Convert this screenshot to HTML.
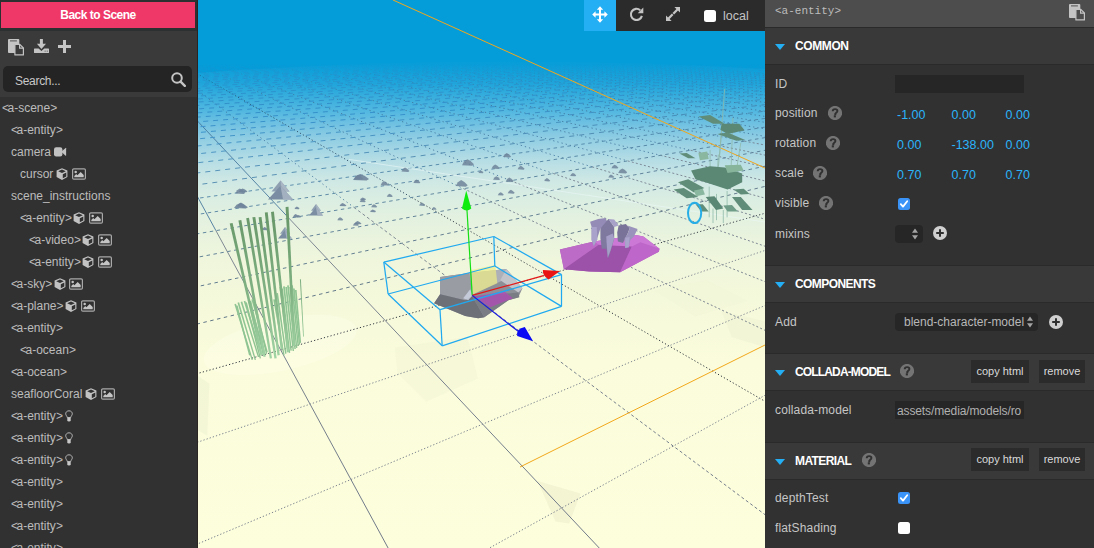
<!DOCTYPE html>
<html lang="en">
<head>
<meta charset="utf-8">
<title>A-Frame Inspector</title>
<style>
*{box-sizing:border-box;margin:0;padding:0}
html,body{width:1094px;height:548px;overflow:hidden;background:#2b2b2b}
body{font-family:"Liberation Sans",sans-serif;font-size:12px;color:#bcbcbc;position:relative}
#left{position:absolute;left:0;top:0;width:198px;height:548px;background:#3a3a3a;overflow:hidden}
#left .topframe{position:absolute;left:0;top:0;width:198px;height:31px;background:#2d3030}
#back{position:absolute;left:1px;top:2px;width:194px;height:26px;background:#ef3868;color:#fff;font-weight:bold;font-size:12px;line-height:26px;text-align:center;letter-spacing:-.5px}
#left .edge{position:absolute;left:197px;top:0;width:1px;height:548px;background:#2a2423}
#tree{position:absolute;left:0;top:97px;width:198px;height:451px;background:#313131}
#tree .row{margin-top:-97px}
#search{position:absolute;left:3px;top:66px;width:189px;height:26px;background:#242424;border-radius:5px}
#search span{position:absolute;left:12px;top:1px;line-height:28px;font-size:12px;color:#c8c8c8;letter-spacing:-.3px}
.row{position:absolute;left:0;height:22px;line-height:22px;font-size:12px;color:#bcbcbc;white-space:nowrap}
.row u{text-decoration:none;letter-spacing:-1.5px}
.row svg{vertical-align:-2px;margin-left:3px}
.row svg+svg{margin-left:3.6px}
#view{position:absolute;left:0;top:0;width:1094px;height:548px;overflow:hidden}
#scene{position:absolute;left:0;top:0;display:block}
#toolbar{position:absolute;left:584px;top:0;width:181px;height:31px;background:#2b2b2b}
#toolbar .act{position:absolute;left:0;top:0;width:32px;height:31px;background:#24aff4}
#right{position:absolute;left:765px;top:0;width:329px;height:548px;background:#313131;overflow:hidden}
#right .hdr{position:absolute;left:0;top:0;width:329px;height:27px;background:#4d4d4d;font-family:"Liberation Mono",monospace;font-size:11px;color:#bcbcbc;line-height:23px;padding-left:10px}
.sec{position:absolute;left:0;width:329px;height:38px;background:#393939;border-top:1px solid #2a2a2a;border-bottom:1px solid #2a2a2a}
.sec b{position:absolute;left:30px;top:0;line-height:37px;font-size:12px;color:#fff;letter-spacing:-.45px;white-space:nowrap}
.sec i{position:absolute;left:10px;top:16px;width:0;height:0;border-left:5px solid transparent;border-right:5px solid transparent;border-top:6px solid #24aff4}
.lab{position:absolute;left:10px;font-size:12px;color:#c6c6c6;letter-spacing:.15px;line-height:16px}
.num{position:absolute;font-size:12.5px;color:#2bb4fa;line-height:16px}
.inp{position:absolute;background:#262626;overflow:hidden;white-space:nowrap}
.inp span{position:absolute;left:2px;top:1px;line-height:18px;font-size:12px;color:#b0b0b0;letter-spacing:-.12px}
.sel{position:absolute;background:#262626;border-radius:4px;white-space:nowrap}
.sel span{position:absolute;left:9px;top:0;line-height:18px;font-size:12px;color:#b8b8b8}
.sel .ud{position:absolute;right:5px;top:3px}
.cb{position:absolute;width:12px;height:12px;border-radius:2.5px;background:#fff}
.cb.on{background:#3a93f7}
.cb svg{display:block}
.btn{position:absolute;height:23px;background:#2b2b2b;color:#dadada;font-size:11px;line-height:22px;text-align:center}
</style>
</head>
<body>
<svg width="0" height="0" style="position:absolute"><defs>
<symbol id="i-cube" viewBox="0 0 12 12"><path d="M6 0.2 L11.4 2.6 V9 L6 11.9 L0.6 9 V2.6 Z" fill="#c2c2c2"/><path d="M6 1.5 L9.8 3.2 L6 4.9 L2.2 3.2 Z M6.8 6.2 L10.3 4.5 V8.4 L6.8 10.3 Z" fill="#313131"/></symbol>
<symbol id="i-image" viewBox="0 0 14 12"><rect x="0.6" y="0.9" width="12.8" height="10.2" rx="1.2" fill="none" stroke="#a8a8a8" stroke-width="1.2"/><circle cx="3.7" cy="3.9" r="1.25" fill="#c4c4c4"/><path d="M2.3 9.3 V7.9 L4.2 6 L5.4 7.2 L8.7 3.9 L11.7 6.9 V9.3 Z" fill="#c4c4c4"/></symbol>
<symbol id="i-video" viewBox="0 0 13 12"><rect x="0" y="1.2" width="8.4" height="9.2" rx="2.2" fill="#c2c2c2"/><path d="M7.2 5.8 L11.6 1.9 Q12.1 1.6 12.1 2.2 V9.4 Q12.1 10 11.6 9.7 Z" fill="#c2c2c2"/></symbol>
<symbol id="i-bulb" viewBox="0 0 8 12"><path d="M4 0.8 C1.9 0.8 0.7 2.3 0.7 3.8 C0.7 5.2 2 6 2.3 7.6 H5.7 C6 6 7.3 5.2 7.3 3.8 C7.3 2.3 6.1 0.8 4 0.8 Z" fill="none" stroke="#bdbdbd" stroke-width="0.95"/><path d="M2.3 7.6 H5.7 V10.3 Q5.7 11.6 4 11.6 Q2.3 11.6 2.3 10.3 Z" fill="#c8c8c8"/></symbol>
<symbol id="i-q" viewBox="0 0 14 14"><circle cx="7" cy="7" r="7.1" fill="#747474"/><path d="M4.7 5.3 C4.7 3.9 5.7 3.1 7.1 3.1 C8.5 3.1 9.4 3.9 9.4 5 C9.4 6.6 7.4 6.6 7.4 8.3 H6.3" fill="none" stroke="#303030" stroke-width="1.9"/><rect x="5.8" y="9.3" width="2.1" height="2.1" fill="#303030"/></symbol>
<symbol id="i-plusc" viewBox="0 0 14 14"><circle cx="7" cy="7" r="7" fill="#d0d0d0"/><path d="M7 3.2 V10.8 M3.2 7 H10.8" stroke="#303030" stroke-width="2" fill="none"/></symbol>
<symbol id="i-clip" viewBox="0 0 17 17"><rect x="0" y="0" width="11.3" height="14" rx="0.9" fill="#c4c4c4"/><rect x="2" y="1.1" width="6.9" height="1.5" fill="#787878"/><path d="M6.9 5.4 H11.8 L15.4 9 V15.9 H6.9 Z" fill="#3a3a3a" stroke="#c4c4c4" stroke-width="1.2" stroke-linejoin="round"/><path d="M11.6 5.6 V9.2 H15.2" fill="none" stroke="#c4c4c4" stroke-width="1.2"/></symbol>
<symbol id="i-clip2" viewBox="0 0 17 17"><rect x="0" y="0" width="11.3" height="14" rx="0.9" fill="#c4c4c4"/><rect x="2" y="1.1" width="6.9" height="1.5" fill="#787878"/><path d="M6.9 5.4 H11.8 L15.4 9 V15.9 H6.9 Z" fill="#4d4d4d" stroke="#c4c4c4" stroke-width="1.2" stroke-linejoin="round"/><path d="M11.6 5.6 V9.2 H15.2" fill="none" stroke="#c4c4c4" stroke-width="1.2"/></symbol>
<symbol id="i-dl" viewBox="0 0 15 14"><path d="M5.9 0 H8.9 V4.8 H12 L7.45 9.9 L2.9 4.8 H5.9 Z" fill="#c4c4c4"/><path d="M0.6 9.4 H4.6 L7.45 11.9 L10.3 9.4 H14.4 Q15 9.4 15 10 V13.4 Q15 14 14.4 14 H0.6 Q0 14 0 13.4 V10 Q0 9.4 0.6 9.4 Z" fill="#c4c4c4"/><rect x="10.6" y="11.6" width="1.1" height="1.1" fill="#6a6a6a"/><rect x="12.7" y="11.6" width="1.1" height="1.1" fill="#6a6a6a"/></symbol>
<symbol id="i-search" viewBox="0 0 15 15"><circle cx="6" cy="6" r="4.8" fill="none" stroke="#c4c4c4" stroke-width="2"/><path d="M9.6 9.6 L13.8 13.8" stroke="#c4c4c4" stroke-width="2.4" stroke-linecap="round"/></symbol>
</defs></svg>
<div id="view"><svg id="scene" width="1094" height="548" viewBox="0 0 1094 548">
<defs>
<linearGradient id="gnd" x1="0" y1="62" x2="0" y2="548" gradientUnits="userSpaceOnUse">
<stop offset="0.0000" stop-color="#069dd9"/>
<stop offset="0.0473" stop-color="#22a6db"/>
<stop offset="0.0988" stop-color="#50b7e0"/>
<stop offset="0.1296" stop-color="#72c2e2"/>
<stop offset="0.1564" stop-color="#8fcde3"/>
<stop offset="0.2016" stop-color="#b5dde5"/>
<stop offset="0.2449" stop-color="#cfe8e4"/>
<stop offset="0.2840" stop-color="#dbeee2"/>
<stop offset="0.3354" stop-color="#e6f2df"/>
<stop offset="0.4074" stop-color="#eff6dc"/>
<stop offset="0.4897" stop-color="#f5f9db"/>
<stop offset="0.6132" stop-color="#fafcdb"/>
<stop offset="1.0000" stop-color="#fdfedc"/>
</linearGradient>
<linearGradient id="fade" x1="0" y1="64" x2="0" y2="548" gradientUnits="userSpaceOnUse">
<stop offset="0" stop-color="#fff" stop-opacity="0"/>
<stop offset="0.025" stop-color="#fff" stop-opacity="0.45"/>
<stop offset="0.08" stop-color="#fff" stop-opacity="0.8"/>
<stop offset="0.3" stop-color="#fff" stop-opacity="0.85"/>
<stop offset="0.5" stop-color="#fff" stop-opacity="0.9"/>
<stop offset="1" stop-color="#fff" stop-opacity="1"/>
</linearGradient>
<mask id="fm" maskUnits="userSpaceOnUse" x="0" y="0" width="1094" height="548"><rect x="0" y="0" width="1094" height="548" fill="url(#fade)"/></mask>
<linearGradient id="weed" x1="0" y1="221" x2="0" y2="360" gradientUnits="userSpaceOnUse"><stop offset="0" stop-color="#6a9a6c"/><stop offset="0.5" stop-color="#7fb183"/><stop offset="1" stop-color="#a2d5a5"/></linearGradient>
</defs>
<rect x="198" y="0" width="567" height="548" fill="#059dd9"/>
<path d="M198 73 Q480 52 765 69 L765 548 L198 548 Z" fill="url(#gnd)"/>
<ellipse cx="280" cy="345" rx="78" ry="26" fill="#ffffee" opacity="0.35" transform="rotate(-12 280 345)"/>
<polygon points="537.5,481.1 580.5,493.5 569.1,523.6 555.6,521.5" fill="#ebebc9" opacity="0.5"/>
<polygon points="394.9,347.4 467.5,337.0 477.9,378.5 426.0,401.8 397.5,373.3" fill="#eef0d0" opacity="0.35"/>
<polygon points="198.0,375.9 209.4,383.7 207.3,435.5 198.0,430.3" fill="#ecefcf" opacity="0.45"/>
<polygon points="721.5,311.1 765.0,321.5 765.0,347.4 731.8,337.0" fill="#eef1d2" opacity="0.5"/>
<polygon points="654.1,290.4 705.9,280.0 747.4,300.7 695.5,316.3" fill="#f2f5d8" opacity="0.5"/>
<g mask="url(#fm)" fill="none" stroke-width="1">
<line x1="106.7" y1="29.4" x2="215.9" y2="230.6" stroke="#3f7199"/>
<line x1="215.9" y1="230.6" x2="2140.6" y2="3778.2" stroke="#6f7888"/>
<line x1="111.3" y1="29.4" x2="289.0" y2="218.3" stroke="#3f7199"/>
<line x1="289.0" y1="218.3" x2="1766.2" y2="1788.2" stroke="#6f7888"/>
<line x1="115.8" y1="29.4" x2="353.8" y2="207.3" stroke="#3f7199" stroke-dasharray="1.3 3"/>
<line x1="353.8" y1="207.3" x2="1651.3" y2="1177.1" stroke="#6f7888" stroke-dasharray="3 2.5"/>
<line x1="120.3" y1="29.3" x2="411.7" y2="197.5" stroke="#1f3a55" stroke-dasharray="1.2 2.2"/>
<line x1="411.7" y1="197.5" x2="1595.5" y2="880.4" stroke="#1f2530" stroke-dasharray="1.2 2.2"/>
<line x1="124.8" y1="29.3" x2="463.7" y2="188.7" stroke="#3f7199" stroke-dasharray="1.3 3"/>
<line x1="463.7" y1="188.7" x2="1562.5" y2="705.2" stroke="#6f7888" stroke-dasharray="2 2.2"/>
<line x1="129.2" y1="29.3" x2="510.7" y2="180.7" stroke="#3f7199" stroke-dasharray="1.3 3"/>
<line x1="510.7" y1="180.7" x2="1540.8" y2="589.5" stroke="#6f7888" stroke-dasharray="2 2.2"/>
<line x1="133.6" y1="29.3" x2="553.3" y2="173.5" stroke="#3f7199" stroke-dasharray="1.3 3"/>
<line x1="553.3" y1="173.5" x2="1525.3" y2="507.4" stroke="#6f7888" stroke-dasharray="2 2.2"/>
<line x1="138.0" y1="29.3" x2="592.2" y2="166.9" stroke="#3f7199" stroke-dasharray="1.3 3"/>
<line x1="592.2" y1="166.9" x2="1513.8" y2="446.1" stroke="#6f7888" stroke-dasharray="2 2.2"/>
<line x1="142.3" y1="29.3" x2="627.7" y2="160.9" stroke="#3f7199" stroke-dasharray="1.3 3"/>
<line x1="627.7" y1="160.9" x2="1504.9" y2="398.7" stroke="#6f7888" stroke-dasharray="2 2.2"/>
<line x1="146.6" y1="29.2" x2="660.4" y2="155.3" stroke="#3f7199" stroke-dasharray="1.3 3"/>
<line x1="660.4" y1="155.3" x2="1497.7" y2="360.8" stroke="#6f7888" stroke-dasharray="2 2.2"/>
<line x1="150.9" y1="29.2" x2="690.6" y2="150.2" stroke="#3f7199" stroke-dasharray="1.3 3"/>
<line x1="690.6" y1="150.2" x2="1491.9" y2="329.9" stroke="#6f7888" stroke-dasharray="2 2.2"/>
<line x1="155.2" y1="29.2" x2="718.5" y2="145.5" stroke="#3f7199" stroke-dasharray="1.3 3"/>
<line x1="718.5" y1="145.5" x2="1487.1" y2="304.1" stroke="#6f7888" stroke-dasharray="2 2.2"/>
<line x1="159.4" y1="29.2" x2="744.4" y2="141.1" stroke="#3f7199" stroke-dasharray="1.3 3"/>
<line x1="744.4" y1="141.1" x2="1483.0" y2="282.4" stroke="#6f7888" stroke-dasharray="2 2.2"/>
<line x1="163.6" y1="29.2" x2="768.4" y2="137.0" stroke="#3f7199" stroke-dasharray="1.3 3"/>
<line x1="768.4" y1="137.0" x2="1479.5" y2="263.8" stroke="#6f7888" stroke-dasharray="2 2.2"/>
<line x1="167.8" y1="29.2" x2="790.9" y2="133.2" stroke="#3f7199" stroke-dasharray="1.3 3"/>
<line x1="790.9" y1="133.2" x2="1476.5" y2="247.7" stroke="#6f7888" stroke-dasharray="2 2.2"/>
<line x1="172.0" y1="29.1" x2="811.9" y2="129.7" stroke="#3f7199" stroke-dasharray="1.3 3"/>
<line x1="811.9" y1="129.7" x2="1473.8" y2="233.7" stroke="#6f7888" stroke-dasharray="2 2.2"/>
<line x1="176.1" y1="29.1" x2="831.5" y2="126.3" stroke="#3f7199" stroke-dasharray="1.3 3"/>
<line x1="831.5" y1="126.3" x2="1471.5" y2="221.2" stroke="#6f7888" stroke-dasharray="2 2.2"/>
<line x1="180.2" y1="29.1" x2="850.0" y2="123.2" stroke="#3f7199" stroke-dasharray="1.3 3"/>
<line x1="850.0" y1="123.2" x2="1469.4" y2="210.2" stroke="#6f7888" stroke-dasharray="2 2.2"/>
<line x1="184.2" y1="29.1" x2="867.3" y2="120.3" stroke="#3f7199" stroke-dasharray="1.3 3"/>
<line x1="867.3" y1="120.3" x2="1467.6" y2="200.4" stroke="#6f7888" stroke-dasharray="2 2.2"/>
<line x1="188.3" y1="29.1" x2="883.7" y2="117.5" stroke="#3f7199" stroke-dasharray="1.3 3"/>
<line x1="883.7" y1="117.5" x2="1465.9" y2="191.5" stroke="#6f7888" stroke-dasharray="2 2.2"/>
<line x1="192.3" y1="29.1" x2="899.1" y2="114.9" stroke="#3f7199" stroke-dasharray="1.3 3"/>
<line x1="899.1" y1="114.9" x2="1464.4" y2="183.5" stroke="#6f7888" stroke-dasharray="2 2.2"/>
<line x1="196.3" y1="29.0" x2="913.7" y2="112.4" stroke="#3f7199" stroke-dasharray="1.3 3"/>
<line x1="913.7" y1="112.4" x2="1463.0" y2="176.2" stroke="#6f7888" stroke-dasharray="2 2.2"/>
<line x1="200.3" y1="29.0" x2="927.6" y2="110.1" stroke="#3f7199" stroke-dasharray="1.3 3"/>
<line x1="927.6" y1="110.1" x2="1461.8" y2="169.6" stroke="#6f7888" stroke-dasharray="2 2.2"/>
<line x1="204.2" y1="29.0" x2="940.7" y2="107.8" stroke="#3f7199" stroke-dasharray="1.3 3"/>
<line x1="940.7" y1="107.8" x2="1460.6" y2="163.5" stroke="#6f7888" stroke-dasharray="2 2.2"/>
<line x1="208.1" y1="29.0" x2="953.1" y2="105.7" stroke="#3f7199" stroke-dasharray="1.3 3"/>
<line x1="953.1" y1="105.7" x2="1459.6" y2="157.9" stroke="#6f7888" stroke-dasharray="2 2.2"/>
<line x1="212.0" y1="29.0" x2="964.9" y2="103.7" stroke="#3f7199" stroke-dasharray="1.3 3"/>
<line x1="964.9" y1="103.7" x2="1458.6" y2="152.7" stroke="#6f7888" stroke-dasharray="2 2.2"/>
<line x1="215.9" y1="29.0" x2="976.2" y2="101.8" stroke="#3f7199" stroke-dasharray="1.3 3"/>
<line x1="976.2" y1="101.8" x2="1457.7" y2="148.0" stroke="#6f7888" stroke-dasharray="2 2.2"/>
<line x1="219.7" y1="29.0" x2="986.9" y2="100.0" stroke="#3f7199" stroke-dasharray="1.3 3"/>
<line x1="986.9" y1="100.0" x2="1456.9" y2="143.5" stroke="#6f7888" stroke-dasharray="2 2.2"/>
<line x1="223.5" y1="28.9" x2="997.2" y2="98.3" stroke="#3f7199" stroke-dasharray="1.3 3"/>
<line x1="997.2" y1="98.3" x2="1456.1" y2="139.4" stroke="#6f7888" stroke-dasharray="2 2.2"/>
<line x1="227.3" y1="28.9" x2="1007.0" y2="96.6" stroke="#3f7199" stroke-dasharray="1.3 3"/>
<line x1="1007.0" y1="96.6" x2="1455.4" y2="135.5" stroke="#6f7888" stroke-dasharray="2 2.2"/>
<line x1="231.1" y1="28.9" x2="1016.3" y2="95.0" stroke="#3f7199" stroke-dasharray="1.3 3"/>
<line x1="1016.3" y1="95.0" x2="1454.7" y2="131.9" stroke="#6f7888" stroke-dasharray="2 2.2"/>
<line x1="-7906.5" y1="234.0" x2="1016.9" y2="33.6" stroke="#2586c8" stroke-dasharray="5 5"/>
<line x1="-8870.5" y1="260.0" x2="1021.3" y2="33.6" stroke="#2586c8" stroke-dasharray="5 5"/>
<line x1="-10098.3" y1="293.2" x2="1025.8" y2="33.7" stroke="#2586c8" stroke-dasharray="5 5"/>
<line x1="-11715.5" y1="336.8" x2="1030.3" y2="33.8" stroke="#2686c8" stroke-dasharray="5 5"/>
<line x1="-13942.3" y1="396.9" x2="1034.8" y2="33.9" stroke="#2686c8" stroke-dasharray="5 5"/>
<line x1="-17203.4" y1="484.9" x2="1039.4" y2="34.0" stroke="#2686c8" stroke-dasharray="5 5"/>
<line x1="-22437.0" y1="626.2" x2="1044.1" y2="34.0" stroke="#2686c8" stroke-dasharray="5 5"/>
<line x1="-32209.3" y1="889.9" x2="1048.8" y2="34.1" stroke="#2786c8" stroke-dasharray="5 5"/>
<line x1="-56943.7" y1="1557.5" x2="1053.5" y2="34.2" stroke="#2786c8" stroke-dasharray="5 5"/>
<line x1="-243200.7" y1="6584.6" x2="1058.3" y2="34.3" stroke="#2786c8" stroke-dasharray="5 5"/>
<line x1="-821195.4" y1="22554.7" x2="1063.1" y2="34.4" stroke="#2786c8" stroke-dasharray="5 5"/>
<line x1="-815934.9" y1="22894.8" x2="1068.0" y2="34.4" stroke="#2786c8" stroke-dasharray="5 5"/>
<line x1="-810547.1" y1="23243.2" x2="1072.9" y2="34.5" stroke="#2887c7" stroke-dasharray="5 5"/>
<line x1="-805027.5" y1="23600.1" x2="1077.9" y2="34.6" stroke="#2887c7" stroke-dasharray="5 5"/>
<line x1="-799371.0" y1="23965.9" x2="1082.9" y2="34.7" stroke="#2887c7" stroke-dasharray="5 5"/>
<line x1="-793572.5" y1="24340.9" x2="1088.0" y2="34.8" stroke="#2887c7" stroke-dasharray="5 5"/>
<line x1="-787626.7" y1="24725.3" x2="1093.2" y2="34.9" stroke="#2887c7" stroke-dasharray="5 5"/>
<line x1="-781527.8" y1="25119.7" x2="1098.4" y2="35.0" stroke="#2987c7" stroke-dasharray="5 5"/>
<line x1="-775269.9" y1="25524.4" x2="1103.6" y2="35.0" stroke="#2987c7" stroke-dasharray="5 5"/>
<line x1="-768846.6" y1="25939.7" x2="1108.9" y2="35.1" stroke="#2987c7" stroke-dasharray="5 5"/>
<line x1="-762251.4" y1="26366.2" x2="1114.3" y2="35.2" stroke="#2987c7" stroke-dasharray="5 5"/>
<line x1="-755477.1" y1="26804.2" x2="1119.7" y2="35.3" stroke="#2a87c7" stroke-dasharray="5 5"/>
<line x1="-748516.4" y1="27254.3" x2="1125.2" y2="35.4" stroke="#2a87c7" stroke-dasharray="5 5"/>
<line x1="-741361.6" y1="27717.0" x2="1130.7" y2="35.5" stroke="#2a87c7" stroke-dasharray="5 5"/>
<line x1="-734004.3" y1="28192.7" x2="1136.3" y2="35.6" stroke="#2a87c7" stroke-dasharray="5 5"/>
<line x1="-726435.9" y1="28682.1" x2="1141.9" y2="35.7" stroke="#2a87c7" stroke-dasharray="5 5"/>
<line x1="-718647.1" y1="29185.8" x2="1147.7" y2="35.8" stroke="#2b87c7" stroke-dasharray="5 5"/>
<line x1="-710628.2" y1="29704.3" x2="1153.4" y2="35.9" stroke="#2b87c7" stroke-dasharray="5 5"/>
<line x1="-702368.8" y1="30238.4" x2="1159.3" y2="36.0" stroke="#2b87c7" stroke-dasharray="5 5"/>
<line x1="-693858.0" y1="30788.7" x2="1165.2" y2="36.1" stroke="#2b87c7" stroke-dasharray="5 5"/>
<line x1="-685084.0" y1="31356.1" x2="1171.2" y2="36.2" stroke="#2c87c7" stroke-dasharray="5 5"/>
<line x1="-676034.6" y1="31941.3" x2="1177.2" y2="36.3" stroke="#2c87c7" stroke-dasharray="5 5"/>
<line x1="-666696.4" y1="32545.1" x2="1183.3" y2="36.4" stroke="#2c87c7" stroke-dasharray="5 5"/>
<line x1="-657055.5" y1="33168.5" x2="1189.5" y2="36.5" stroke="#2c87c7" stroke-dasharray="5 5"/>
<line x1="-647096.8" y1="33812.5" x2="1195.7" y2="36.6" stroke="#2c87c7" stroke-dasharray="5 5"/>
<line x1="-636804.5" y1="34478.0" x2="1202.1" y2="36.7" stroke="#2d88c6" stroke-dasharray="5 5"/>
<line x1="-626161.5" y1="35166.2" x2="1208.5" y2="36.8" stroke="#2d88c6" stroke-dasharray="5 5"/>
<line x1="-615149.5" y1="35878.3" x2="1214.9" y2="36.9" stroke="#2d88c6" stroke-dasharray="5 5"/>
<line x1="-603749.1" y1="36615.5" x2="1221.5" y2="37.1" stroke="#2d88c6" stroke-dasharray="5 5"/>
<line x1="-591939.2" y1="37379.1" x2="1228.1" y2="37.2" stroke="#2d88c6" stroke-dasharray="5 5"/>
<line x1="-579697.4" y1="38170.7" x2="1234.8" y2="37.3" stroke="#2e88c6" stroke-dasharray="5 5"/>
<line x1="-566999.6" y1="38991.8" x2="1241.6" y2="37.4" stroke="#2e88c6" stroke-dasharray="5 5"/>
<line x1="-553819.9" y1="39844.1" x2="1248.5" y2="37.5" stroke="#2e88c6" stroke-dasharray="5 5"/>
<line x1="-540130.2" y1="40729.3" x2="1255.4" y2="37.6" stroke="#2e88c6" stroke-dasharray="5 5"/>
<line x1="-525900.4" y1="41649.4" x2="1262.5" y2="37.8" stroke="#2f88c6" stroke-dasharray="5 5"/>
<line x1="-511097.8" y1="42606.6" x2="1269.6" y2="37.9" stroke="#2f88c6" stroke-dasharray="5 5"/>
<line x1="-495687.3" y1="43603.1" x2="1276.8" y2="38.0" stroke="#2f88c6" stroke-dasharray="5 5"/>
<line x1="-479630.5" y1="44641.4" x2="1284.1" y2="38.1" stroke="#3388c2" stroke-dasharray="5 5"/>
<line x1="-462885.8" y1="45724.2" x2="1291.5" y2="38.3" stroke="#3788bf" stroke-dasharray="5 5"/>
<line x1="-445408.3" y1="46854.3" x2="1299.0" y2="38.4" stroke="#3b88bc" stroke-dasharray="5 5"/>
<line x1="-427148.6" y1="48035.1" x2="1306.5" y2="38.5" stroke="#3f88b8" stroke-dasharray="5 5"/>
<line x1="-408053.0" y1="49269.8" x2="1314.2" y2="38.6" stroke="#4284b1" stroke-dasharray="5 5"/>
<line x1="-388062.9" y1="50562.5" x2="1322.0" y2="38.8" stroke="#4481aa" stroke-dasharray="5 5"/>
<line x1="-367113.7" y1="51917.1" x2="1329.8" y2="38.9" stroke="#477ea3" stroke-dasharray="3.5 3.5"/>
<line x1="-345134.9" y1="53338.3" x2="1337.8" y2="39.0" stroke="#4a7a9c" stroke-dasharray="3.5 3.5"/>
<line x1="-322048.7" y1="54831.2" x2="1345.9" y2="39.2" stroke="#4c7694" stroke-dasharray="3.5 3.5"/>
<line x1="-297769.0" y1="56401.2" x2="1354.1" y2="39.3" stroke="#4d718d" stroke-dasharray="3.5 3.5"/>
<line x1="-272201.1" y1="58054.5" x2="1362.4" y2="39.5" stroke="#4e6c86" stroke-dasharray="3.5 3.5"/>
<line x1="-245239.4" y1="59797.9" x2="1370.8" y2="39.6" stroke="#50687e" stroke-dasharray="3.5 3.5"/>
<line x1="-216766.9" y1="61639.0" x2="1379.3" y2="39.8" stroke="#1f2530" stroke-dasharray="1.2 2.2"/>
<line x1="-186652.9" y1="63586.3" x2="1387.9" y2="39.9" stroke="#787f8c" stroke-dasharray="1.3 2"/>
<line x1="-154751.2" y1="65649.2" x2="1396.7" y2="40.1" stroke="#787f8c" stroke-dasharray="1.3 2"/>
<line x1="-120897.9" y1="67838.2" x2="1405.5" y2="40.2" stroke="#787f8c" stroke-dasharray="1.3 2"/>
<line x1="-84908.1" y1="70165.5" x2="1414.5" y2="40.4" stroke="#787f8c" stroke-dasharray="1.3 2"/>
<line x1="-46573.0" y1="72644.3" x2="1423.6" y2="40.5" stroke="#787f8c" stroke-dasharray="1.3 2"/>
<line x1="-5655.7" y1="75290.2" x2="1432.9" y2="40.7" stroke="#787f8c" stroke-dasharray="1.3 2"/>
</g>
<line x1="349" y1="159.4" x2="765" y2="222" stroke="#eaf7f7" stroke-width="1" opacity="0.6"/>
<line x1="393" y1="0" x2="765" y2="168" stroke="#f2a71b" stroke-width="1"/>
<line x1="520" y1="467" x2="765" y2="345" stroke="#f2a71b" stroke-width="1"/>
<polygon points="280.5,180.5 271.5,191.5 289.5,191.5" fill="#8e9fb2"/>
<polygon points="280.5,180.5 281.8,191.5 289.5,191.5" fill="#a9b6c3"/>
<polygon points="280.5,185.8 268.0,199.5 293.0,199.5" fill="#7b8da2"/>
<polygon points="280.5,185.8 283.0,199.5 293.0,199.5" fill="#a3b0bf"/>
<polygon points="316.0,204.0 311.0,210.7 321.0,210.7" fill="#8e9fb2"/>
<polygon points="316.0,204.0 316.7,210.7 321.0,210.7" fill="#a9b6c3"/>
<polygon points="316.0,207.2 309.0,215.5 323.0,215.5" fill="#7b8da2"/>
<polygon points="316.0,207.2 317.4,215.5 323.0,215.5" fill="#a3b0bf"/>
<polygon points="285.0,227.0 280.0,233.7 290.0,233.7" fill="#8e9fb2"/>
<polygon points="285.0,227.0 285.7,233.7 290.0,233.7" fill="#a9b6c3"/>
<polygon points="285.0,230.2 278.0,238.5 292.0,238.5" fill="#7b8da2"/>
<polygon points="285.0,230.2 286.4,238.5 292.0,238.5" fill="#a3b0bf"/>
<polygon points="234.0,208.0 236.5,204.8 240.3,203.0 244.1,204.5 248.0,207.2 245.9,208.5" fill="#6f849a" opacity="0.9"/>
<polygon points="238.5,192.0 240.1,189.7 242.6,188.5 245.0,189.6 247.5,191.5 246.2,192.3" fill="#6f849a" opacity="0.9"/>
<polygon points="353.0,180.0 355.9,176.1 360.2,174.0 364.5,175.8 369.0,179.1 366.6,180.6" fill="#6f849a" opacity="0.9"/>
<polygon points="339.5,206.0 340.8,204.1 342.6,203.0 344.5,203.9 346.5,205.6 345.4,206.3" fill="#6f849a" opacity="0.9"/>
<polygon points="354.5,224.0 355.8,222.1 357.6,221.0 359.5,221.9 361.5,223.6 360.4,224.3" fill="#6f849a" opacity="0.9"/>
<polygon points="360.0,200.0 361.1,198.4 362.7,197.5 364.3,198.2 366.0,199.6 365.1,200.2" fill="#6f849a" opacity="0.9"/>
<polygon points="370.0,212.0 371.1,210.4 372.7,209.5 374.3,210.2 376.0,211.6 375.1,212.2" fill="#6f849a" opacity="0.9"/>
<polygon points="293.0,217.0 294.1,215.1 295.7,214.0 297.3,214.9 299.0,216.6 298.1,217.3" fill="#6f849a" opacity="0.9"/>
<polygon points="294.5,209.0 295.4,207.4 296.8,206.5 298.1,207.2 299.5,208.6 298.8,209.2" fill="#6f849a" opacity="0.9"/>
<polygon points="262.0,230.0 263.1,228.1 264.7,227.0 266.3,227.9 268.0,229.6 267.1,230.3" fill="#6f849a" opacity="0.9"/>
<polygon points="235.3,193.4 237.1,190.2 239.8,188.4 242.5,189.9 245.3,192.7 243.8,193.9" fill="#6f849a" opacity="0.85"/>
<polygon points="237.3,206.6 238.7,204.0 240.9,202.6 243.1,203.8 245.3,206.0 244.1,207.0" fill="#6f849a" opacity="0.85"/>
<polygon points="354.0,179.2 355.7,176.2 358.1,174.7 360.5,176.0 363.0,178.5 361.7,179.6" fill="#6f849a" opacity="0.85"/>
<polygon points="380.6,185.2 382.0,182.6 384.2,181.2 386.4,182.4 388.6,184.6 387.4,185.6" fill="#6f849a" opacity="0.85"/>
<polygon points="401.4,171.6 402.9,169.0 405.0,167.6 407.2,168.8 409.4,171.0 408.2,172.0" fill="#6f849a" opacity="0.85"/>
<polygon points="413.4,182.9 414.7,180.6 416.6,179.4 418.4,180.4 420.4,182.4 419.4,183.2" fill="#6f849a" opacity="0.85"/>
<polygon points="359.7,201.9 360.8,200.0 362.4,198.9 364.0,199.8 365.7,201.5 364.8,202.2" fill="#6f849a" opacity="0.85"/>
<polygon points="371.2,207.2 372.3,205.2 373.9,204.2 375.5,205.1 377.2,206.7 376.3,207.5" fill="#6f849a" opacity="0.85"/>
<polygon points="386.8,196.7 387.9,194.8 389.5,193.7 391.1,194.6 392.8,196.3 391.9,197.0" fill="#6f849a" opacity="0.85"/>
<polygon points="419.1,205.6 420.2,203.6 421.8,202.6 423.4,203.5 425.1,205.1 424.2,205.9" fill="#6f849a" opacity="0.85"/>
<polygon points="337.3,220.2 338.4,218.2 340.0,217.2 341.6,218.1 343.3,219.7 342.4,220.5" fill="#6f849a" opacity="0.85"/>
<polygon points="352.9,225.4 354.0,223.4 355.6,222.4 357.3,223.3 358.9,224.9 358.0,225.7" fill="#6f849a" opacity="0.85"/>
<polygon points="296.1,217.4 297.0,215.7 298.4,214.9 299.7,215.6 301.1,217.0 300.4,217.6" fill="#6f849a" opacity="0.85"/>
<polygon points="462.0,165.2 464.1,161.3 467.4,159.2 470.6,161.0 474.0,164.3 472.2,165.8" fill="#6f849a" opacity="0.85"/>
<polygon points="455.7,186.1 457.9,182.2 461.1,180.1 464.4,181.9 467.7,185.2 465.9,186.7" fill="#6f849a" opacity="0.85"/>
<polygon points="491.6,168.5 493.0,165.9 495.2,164.5 497.4,165.7 499.6,167.9 498.4,168.9" fill="#6f849a" opacity="0.85"/>
<polygon points="503.1,157.0 504.5,154.4 506.7,153.0 508.8,154.2 511.1,156.4 509.9,157.4" fill="#6f849a" opacity="0.85"/>
<polygon points="517.6,169.3 518.9,167.1 520.8,165.8 522.7,166.9 524.6,168.8 523.6,169.7" fill="#6f849a" opacity="0.85"/>
<polygon points="505.7,181.5 507.1,178.9 509.3,177.5 511.4,178.7 513.7,180.9 512.5,181.9" fill="#6f849a" opacity="0.85"/>
<polygon points="493.1,179.8 494.4,177.5 496.3,176.3 498.2,177.3 500.1,179.2 499.1,180.1" fill="#6f849a" opacity="0.85"/>
<polygon points="507.7,193.3 509.0,191.0 510.9,189.8 512.8,190.9 514.7,192.8 513.7,193.7" fill="#6f849a" opacity="0.85"/>
<polygon points="497.8,195.2 498.9,193.2 500.5,192.2 502.1,193.1 503.8,194.7 502.9,195.5" fill="#6f849a" opacity="0.85"/>
<polygon points="544.2,181.1 545.3,179.2 546.9,178.1 548.5,179.0 550.2,180.7 549.3,181.4" fill="#6f849a" opacity="0.85"/>
<polygon points="570.2,175.9 571.3,173.9 572.9,172.9 574.6,173.8 576.2,175.4 575.3,176.2" fill="#6f849a" opacity="0.85"/>
<polygon points="611.4,168.3 612.7,166.0 614.6,164.8 616.5,165.8 618.4,167.8 617.4,168.6" fill="#6f849a" opacity="0.85"/>
<polygon points="618.2,172.9 619.9,170.0 622.3,168.4 624.7,169.8 627.2,172.2 625.9,173.4" fill="#6f849a" opacity="0.85"/>
<polygon points="608.3,177.5 609.4,175.5 611.0,174.5 612.6,175.4 614.3,177.0 613.4,177.8" fill="#6f849a" opacity="0.85"/>
<polygon points="431.6,209.5 432.5,207.9 433.9,207.0 435.2,207.8 436.6,209.2 435.9,209.8" fill="#6f849a" opacity="0.85"/>
<polygon points="478.5,173.1 479.4,171.4 480.8,170.6 482.1,171.3 483.5,172.7 482.8,173.3" fill="#6f849a" opacity="0.85"/>
<g>
<polygon points="236.0,303.8 234.4,304.3 251.6,360.1 252.9,359.7" fill="#8fc493"/>
<polygon points="239.1,302.2 237.5,302.7 254.7,360.1 256.0,359.7" fill="#8fc493"/>
<polygon points="242.2,301.6 240.6,302.1 257.8,357.0 259.1,356.6" fill="#8fc493"/>
<polygon points="245.3,300.7 243.7,301.2 260.9,355.5 262.3,355.1" fill="#8fc493"/>
<polygon points="249.4,299.8 247.7,300.2 264.0,353.9 265.4,353.5" fill="#8fc493"/>
<polygon points="253.1,299.1 251.4,299.6 266.5,352.4 267.8,352.0" fill="#8fc493"/>
<polygon points="281.1,286.9 279.4,287.1 287.3,352.3 288.7,352.1" fill="#8fc493"/>
<polygon points="284.8,286.2 283.1,286.4 290.4,350.7 291.8,350.5" fill="#8fc493"/>
<polygon points="288.8,285.3 287.1,285.5 294.4,349.1 295.8,349.0" fill="#8fc493"/>
<polygon points="292.9,285.3 291.2,285.5 297.5,346.0 298.9,345.9" fill="#8fc493"/>
<polygon points="296.6,290.0 294.9,290.1 299.7,342.9 301.1,342.8" fill="#8fc493"/>
<polygon points="237.6,305.4 235.9,305.8 249.1,355.5 250.5,355.1" fill="#8fc493"/>
<polygon points="246.9,302.3 245.2,302.7 259.7,358.6 261.0,358.2" fill="#8fc493"/>
<polygon points="251.2,300.7 249.6,301.1 262.8,355.4 264.1,355.1" fill="#8fc493"/>
<polygon points="255.6,302.3 253.9,302.7 265.9,353.9 267.2,353.6" fill="#8fc493"/>
<polygon points="282.9,288.4 281.2,288.6 288.8,352.9 290.2,352.7" fill="#8fc493"/>
<polygon points="287.0,286.9 285.3,287.1 292.6,351.0 294.0,350.9" fill="#8fc493"/>
<polygon points="291.0,286.9 289.3,287.0 296.0,347.9 297.4,347.8" fill="#8fc493"/>
<polygon points="294.7,288.4 293.0,288.6 298.8,344.8 300.2,344.7" fill="#8fc493"/>
<polygon points="278.0,293.0 276.3,293.3 285.1,353.8 286.5,353.6" fill="#8fc493"/>
<polygon points="274.8,299.2 273.2,299.5 283.3,355.4 284.6,355.2" fill="#8fc493"/>
<polygon points="232.6,223.0 229.7,223.6 260.5,355.5 262.7,355.0" fill="url(#weed)"/>
<polygon points="241.3,219.9 238.4,220.4 263.5,357.0 265.8,356.6" fill="url(#weed)"/>
<polygon points="249.0,217.8 246.2,218.2 269.8,358.6 272.0,358.2" fill="url(#weed)"/>
<polygon points="255.3,216.9 252.4,217.3 274.4,358.6 276.7,358.2" fill="url(#weed)"/>
<polygon points="261.5,216.9 258.6,217.3 277.5,355.4 279.8,355.1" fill="url(#weed)"/>
<polygon points="267.7,212.3 264.8,212.6 280.6,349.2 282.9,348.9" fill="url(#weed)"/>
<polygon points="273.9,211.6 271.0,212.0 286.8,352.3 289.1,352.0" fill="url(#weed)"/>
<polygon points="288.5,206.8 285.6,206.9 293.0,346.0 295.4,345.9" fill="url(#weed)"/>
<polygon points="300.9,279.2 299.9,279.2 303.1,336.7 303.9,336.6" fill="url(#weed)"/>
</g>
<line x1="724.7" y1="88.8" x2="719.5" y2="156.0" stroke="#8db8a8" stroke-width="0.9" opacity="0.85"/>
<line x1="722.4" y1="123.8" x2="718.3" y2="167.6" stroke="#8db8a8" stroke-width="0.9" opacity="0.85"/>
<line x1="732.9" y1="118.0" x2="731.1" y2="167.6" stroke="#8db8a8" stroke-width="0.9" opacity="0.85"/>
<line x1="740.8" y1="142.8" x2="736.4" y2="170.6" stroke="#8db8a8" stroke-width="0.9" opacity="0.85"/>
<line x1="710.1" y1="150.1" x2="710.1" y2="167.6" stroke="#8db8a8" stroke-width="0.9" opacity="0.85"/>
<line x1="718.3" y1="154.5" x2="717.7" y2="167.6" stroke="#8db8a8" stroke-width="0.9" opacity="0.85"/>
<line x1="709.2" y1="186.6" x2="709.2" y2="217.3" stroke="#8db8a8" stroke-width="0.9" opacity="0.85"/>
<line x1="716.5" y1="193.9" x2="716.5" y2="220.2" stroke="#8db8a8" stroke-width="0.9" opacity="0.85"/>
<line x1="727.1" y1="191.0" x2="727.1" y2="217.3" stroke="#8db8a8" stroke-width="0.9" opacity="0.85"/>
<line x1="723.3" y1="210.0" x2="723.3" y2="223.1" stroke="#8db8a8" stroke-width="0.9" opacity="0.85"/>
<line x1="713.0" y1="208.5" x2="713.0" y2="223.1" stroke="#8db8a8" stroke-width="0.9" opacity="0.85"/>
<polygon points="698.4,116.5 710.1,115.1 724.7,123.8 713.0,123.8" fill="#5f8d79"/>
<polygon points="721.8,123.8 739.3,123.8 744.6,130.2 727.6,134.0 720.3,129.7" fill="#5b8875"/>
<polygon points="717.4,134.0 727.6,132.6 745.2,139.9 736.4,140.8" fill="#5f8d79"/>
<polygon points="679.4,153.6 686.7,153.0 695.5,158.3 688.2,158.3" fill="#5f8d79"/>
<polygon points="698.4,153.0 707.2,151.6 708.7,158.9 699.9,160.3" fill="#8ab79f"/>
<polygon points="691.1,170.6 710.1,166.2 724.7,167.6 742.2,173.5 742.2,182.2 727.6,189.6 710.1,183.7 695.5,179.3" fill="#5a8874"/>
<polygon points="724.7,165.3 740.8,164.7 743.7,170.6 727.6,172.9" fill="#86b59c"/>
<polygon points="678.0,182.2 688.2,179.3 704.3,188.1 694.0,192.5" fill="#5f8d79"/>
<polygon points="673.6,189.6 683.8,188.1 698.4,196.9 686.7,198.3" fill="#5f8d79"/>
<polygon points="694.0,190.4 702.8,188.7 704.9,194.5 696.1,196.3" fill="#8ab79f"/>
<polygon points="705.7,196.9 714.5,196.3 723.3,208.5 716.0,210.0" fill="#5a8874"/>
<polygon points="732.0,196.9 740.8,196.9 752.5,210.0 742.2,210.0" fill="#5f8d79"/>
<polygon points="723.3,205.6 732.0,205.0 737.9,211.5 727.6,211.5" fill="#6f9d88"/>
<polygon points="733.5,189.6 743.7,188.7 749.6,193.9 740.8,194.5" fill="#5f8d79"/>
<polygon points="695.5,204.2 702.8,204.2 708.7,211.5 701.3,211.5" fill="#5f8d79"/>
<ellipse cx="694.6" cy="212.9" rx="6.6" ry="10.2" fill="none" stroke="#27aee6" stroke-width="2"/>
<polygon points="559.9,249.5 593.8,241.5 636.1,234.9 643.4,236.4 659.5,248.8 658.8,251.7 620.1,272.2 589.4,271.4 563.9,269.2" fill="#b25cbc"/>
<polygon points="559.9,249.5 593.8,241.5 598.9,244.7 563.9,269.2" fill="#bc6cc6"/>
<polygon points="598.9,244.7 631.8,246.6 620.1,272.2 589.4,271.4 563.9,269.2" fill="#9c52a8"/>
<polygon points="631.8,246.6 637.6,236.4 659.5,248.8 658.8,251.7 620.1,272.2" fill="#be66ca"/>
<polygon points="593.8,241.5 636.1,234.9 643.4,236.4 659.5,248.8 640.5,242.2 631.8,246.6 598.9,244.7" fill="#cc78d6"/>
<polygon points="590.1,221.8 598.2,218.9 605.5,218.1 608.4,224.0 600.4,228.4 596.7,240.0 593.8,245.9 591.6,240.0 591.6,226.9" fill="#948cb6"/>
<polygon points="591.6,226.9 596.7,226.9 597.4,239.3 593.8,245.9 591.6,240.0" fill="#a9a2ca"/>
<polygon points="600.4,228.4 608.4,218.9 614.2,226.9 614.2,238.6 611.3,248.8 608.4,258.3 606.2,248.8 601.8,248.8 600.4,238.6" fill="#7f789f"/>
<polygon points="606.2,236.4 612.8,233.5 614.2,238.6 610.6,250.3 607.7,257.8" fill="#a59ec6"/>
<polygon points="608.4,218.9 614.2,219.6 618.6,225.4 614.2,226.9" fill="#a8a1c8"/>
<polygon points="618.6,225.4 625.9,224.0 629.6,228.4 627.4,234.2 623.0,243.0 617.9,241.5 617.2,232.7" fill="#7a7399"/>
<polygon points="627.4,225.4 637.6,229.1 633.9,236.4 630.3,240.0 628.8,247.3 625.2,248.1 624.5,238.6 627.4,234.2 629.6,228.4" fill="#9a93bb"/>
<polygon points="625.2,237.8 629.6,237.1 628.8,247.3 625.2,248.1" fill="#aaa3cb"/>
<polygon points="440.1,277.1 469.2,273.1 506.3,269.1 512.4,276.1 522.4,288.2 518.4,297.2 508.4,300.2 484.3,317.3 478.2,318.3 465.2,315.9 434.1,303.3 440.1,294.2" fill="#8e9098"/>
<polygon points="440.1,277.1 469.2,273.1 472.2,295.2 465.2,300.2 440.1,294.2" fill="#9a9ca4"/>
<polygon points="469.2,273.1 506.3,269.1 512.4,276.1 496.3,283.2 472.6,294.6" fill="#aeb0b8"/>
<polygon points="506.3,269.1 512.4,276.1 522.4,288.2 518.4,292.6 500.3,280.2" fill="#c2c4ca"/>
<polygon points="434.1,303.3 440.1,294.2 465.2,300.2 472.2,296.2 484.3,317.3 478.2,318.3 465.2,315.9" fill="#6e7078"/>
<polygon points="472.2,296.2 518.4,292.6 519.4,297.2 508.4,300.2 484.3,317.3" fill="#7b7d85"/>
<polygon points="463.2,298.2 470.2,289.2 472.6,295.2 468.2,300.2" fill="#cfd6e6" opacity="0.8"/>
<polygon points="471.2,270.1 495.3,265.1 497.3,283.2 472.6,294.6" fill="#ecec84" opacity="0.7"/>
<polygon points="474.2,296.8 504.3,291.2 512.8,298.2 490.3,307.3" fill="#b048b8" opacity="0.75"/>
<line x1="383.8" y1="262.1" x2="493.8" y2="236.5" stroke="#20a9f0" stroke-width="1.25"/>
<line x1="493.8" y1="236.5" x2="561.5" y2="274.6" stroke="#20a9f0" stroke-width="1.25"/>
<line x1="561.5" y1="274.6" x2="440.0" y2="309.7" stroke="#20a9f0" stroke-width="1.25"/>
<line x1="440.0" y1="309.7" x2="383.8" y2="262.1" stroke="#20a9f0" stroke-width="1.25"/>
<line x1="388.1" y1="294.0" x2="494.8" y2="266.0" stroke="#20a9f0" stroke-width="1.25"/>
<line x1="494.8" y1="266.0" x2="561.5" y2="306.4" stroke="#20a9f0" stroke-width="1.25"/>
<line x1="561.5" y1="306.4" x2="442.2" y2="345.8" stroke="#20a9f0" stroke-width="1.25"/>
<line x1="442.2" y1="345.8" x2="388.1" y2="294.0" stroke="#20a9f0" stroke-width="1.25"/>
<line x1="383.8" y1="262.1" x2="388.1" y2="294.0" stroke="#20a9f0" stroke-width="1.25"/>
<line x1="493.8" y1="236.5" x2="494.8" y2="266.0" stroke="#20a9f0" stroke-width="1.25"/>
<line x1="561.5" y1="274.6" x2="561.5" y2="306.4" stroke="#20a9f0" stroke-width="1.25"/>
<line x1="440.0" y1="309.7" x2="442.2" y2="345.8" stroke="#20a9f0" stroke-width="1.25"/>
<line x1="472.2" y1="295.4" x2="466.9" y2="209" stroke="#14e014" stroke-width="1.2"/>
<path d="M466.2 190.5 L462 208.5 Q466.6 212.5 471.3 208.5 Z" fill="#10ec10"/>
<line x1="472.2" y1="295.4" x2="543.5" y2="275.7" stroke="#e41818" stroke-width="1.2"/>
<path d="M560.0 270.9 L542.9 270.1 Q542.5 276.1 548.5 279.4 Z" fill="#ea1414"/>
<line x1="472.2" y1="295.4" x2="518.8" y2="331.8" stroke="#1414e4" stroke-width="1.2"/>
<path d="M533.1 341.2 L517.2 336.0 Q516.0 328.4 524.8 326.9 Z" fill="#0a0af4"/>
</svg></div>
<div id="left">
<div class="topframe"></div>
<div id="back">Back to Scene</div>
<svg style="position:absolute;left:8px;top:39px" width="17" height="17" viewBox="0 0 17 17"><use href="#i-clip"/></svg>
<svg style="position:absolute;left:34px;top:39px" width="15" height="14" viewBox="0 0 15 14"><use href="#i-dl"/></svg>
<svg style="position:absolute;left:58px;top:40px" width="13" height="13" viewBox="0 0 13 13"><path d="M5 0 H8 V5 H13 V8 H8 V13 H5 V8 H0 V5 H5 Z" fill="#c4c4c4"/></svg>
<div id="search"><span>Search...</span><svg style="position:absolute;left:168px;top:6px" width="15" height="15" viewBox="0 0 15 15"><use href="#i-search"/></svg></div>
<div id="tree">
<div class="row" style="top:97px;padding-left:2px"><span><u>&lt;</u>a-scene<u>&gt;</u></span></div>
<div class="row" style="top:119px;padding-left:11px"><span><u>&lt;</u>a-entity<u>&gt;</u></span></div>
<div class="row" style="top:141px;padding-left:11px"><span>camera</span><svg class="ic" width="13" height="12" viewBox="0 0 13 12"><use href="#i-video"/></svg></div>
<div class="row" style="top:163px;padding-left:20px"><span>cursor</span><svg class="ic" width="12" height="12" viewBox="0 0 12 12"><use href="#i-cube"/></svg><svg class="ic" width="14" height="12" viewBox="0 0 14 12"><use href="#i-image"/></svg></div>
<div class="row" style="top:185px;padding-left:11px"><span>scene_instructions</span></div>
<div class="row" style="top:207px;padding-left:20px"><span><u>&lt;</u>a-entity<u>&gt;</u></span><svg class="ic" width="12" height="12" viewBox="0 0 12 12"><use href="#i-cube"/></svg><svg class="ic" width="14" height="12" viewBox="0 0 14 12"><use href="#i-image"/></svg></div>
<div class="row" style="top:229px;padding-left:29px"><span><u>&lt;</u>a-video<u>&gt;</u></span><svg class="ic" width="12" height="12" viewBox="0 0 12 12"><use href="#i-cube"/></svg><svg class="ic" width="14" height="12" viewBox="0 0 14 12"><use href="#i-image"/></svg></div>
<div class="row" style="top:251px;padding-left:29px"><span><u>&lt;</u>a-entity<u>&gt;</u></span><svg class="ic" width="12" height="12" viewBox="0 0 12 12"><use href="#i-cube"/></svg><svg class="ic" width="14" height="12" viewBox="0 0 14 12"><use href="#i-image"/></svg></div>
<div class="row" style="top:273px;padding-left:11px"><span><u>&lt;</u>a-sky<u>&gt;</u></span><svg class="ic" width="12" height="12" viewBox="0 0 12 12"><use href="#i-cube"/></svg><svg class="ic" width="14" height="12" viewBox="0 0 14 12"><use href="#i-image"/></svg></div>
<div class="row" style="top:295px;padding-left:11px"><span><u>&lt;</u>a-plane<u>&gt;</u></span><svg class="ic" width="12" height="12" viewBox="0 0 12 12"><use href="#i-cube"/></svg><svg class="ic" width="14" height="12" viewBox="0 0 14 12"><use href="#i-image"/></svg></div>
<div class="row" style="top:317px;padding-left:11px"><span><u>&lt;</u>a-entity<u>&gt;</u></span></div>
<div class="row" style="top:339px;padding-left:20px"><span><u>&lt;</u>a-ocean<u>&gt;</u></span></div>
<div class="row" style="top:361px;padding-left:11px"><span><u>&lt;</u>a-ocean<u>&gt;</u></span></div>
<div class="row" style="top:383px;padding-left:11px"><span>seafloorCoral</span><svg class="ic" width="12" height="12" viewBox="0 0 12 12"><use href="#i-cube"/></svg><svg class="ic" width="14" height="12" viewBox="0 0 14 12"><use href="#i-image"/></svg></div>
<div class="row" style="top:405px;padding-left:11px"><span><u>&lt;</u>a-entity<u>&gt;</u></span><svg class="ic" style="margin-left:4px" width="8" height="12" viewBox="0 0 8 12"><use href="#i-bulb"/></svg></div>
<div class="row" style="top:427px;padding-left:11px"><span><u>&lt;</u>a-entity<u>&gt;</u></span><svg class="ic" style="margin-left:4px" width="8" height="12" viewBox="0 0 8 12"><use href="#i-bulb"/></svg></div>
<div class="row" style="top:449px;padding-left:11px"><span><u>&lt;</u>a-entity<u>&gt;</u></span><svg class="ic" style="margin-left:4px" width="8" height="12" viewBox="0 0 8 12"><use href="#i-bulb"/></svg></div>
<div class="row" style="top:471px;padding-left:11px"><span><u>&lt;</u>a-entity<u>&gt;</u></span></div>
<div class="row" style="top:493px;padding-left:11px"><span><u>&lt;</u>a-entity<u>&gt;</u></span></div>
<div class="row" style="top:515px;padding-left:11px"><span><u>&lt;</u>a-entity<u>&gt;</u></span></div>
<div class="row" style="top:537px;padding-left:11px"><span><u>&lt;</u>a-entity<u>&gt;</u></span></div>
</div>
<div class="edge"></div>
</div>
<div id="toolbar"><div class="act"></div>
<svg style="position:absolute;left:8px;top:6px" width="16" height="17" viewBox="0 0 16 17"><path d="M8 0.3 L11.2 3.8 H9 V7.5 H12.4 V5.3 L15.8 8.5 L12.4 11.7 V9.5 H9 V13.2 H11.2 L8 16.7 L4.8 13.2 H7 V9.5 H3.6 V11.7 L0.2 8.5 L3.6 5.3 V7.5 H7 V3.8 H4.8 Z" fill="#fff"/></svg>
<svg style="position:absolute;left:45px;top:7px" width="15" height="15" viewBox="0 0 15 15"><path d="M11.2 3.2 A5.6 5.6 0 1 0 12.9 8.9" fill="none" stroke="#c4c4c4" stroke-width="2.1"/><path d="M14.3 0.6 V6.2 H8.7 Z" fill="#c4c4c4"/></svg>
<svg style="position:absolute;left:82px;top:7px" width="14" height="14" viewBox="0 0 14 14"><path d="M8.4 0 H14 V5.6 L12 3.6 L8.1 7.5 L6.5 5.9 L10.4 2 Z M5.6 14 H0 V8.4 L2 10.4 L5.9 6.5 L7.5 8.1 L3.6 12 Z" fill="#c4c4c4"/></svg>
<div style="position:absolute;left:120px;top:10px;width:12px;height:12px;border-radius:2.5px;background:#fff"></div>
<span style="position:absolute;left:139px;top:1px;line-height:31px;font-size:12.5px;color:#c4c4c4">local</span>
</div>
<div id="right">
<div class="hdr">&lt;a-entity&gt;</div>
<svg style="position:absolute;left:304px;top:4px" width="17" height="17" viewBox="0 0 17 17"><use href="#i-clip2"/></svg>
<div class="sec" style="top:27px"><i></i><b style="letter-spacing:-.4px">COMMON</b></div>
<div class="lab" style="top:76px">ID</div>
<div class="inp" style="left:130px;top:75px;width:129px;height:18px"></div>
<div class="lab" style="top:105px">position</div><svg style="position:absolute;left:62.7px;top:106.4px" width="14" height="14" viewBox="0 0 14 14"><use href="#i-q"/></svg>
<div class="num" style="left:132px;top:107px">-1.00</div><div class="num" style="left:186.5px;top:107px">0.00</div><div class="num" style="left:240.5px;top:107px">0.00</div>
<div class="lab" style="top:135px">rotation</div><svg style="position:absolute;left:61.3px;top:136.2px" width="14" height="14" viewBox="0 0 14 14"><use href="#i-q"/></svg>
<div class="num" style="left:132px;top:137px">0.00</div><div class="num" style="left:186.5px;top:137px">-138.00</div><div class="num" style="left:240.5px;top:137px">0.00</div>
<div class="lab" style="top:165px">scale</div><svg style="position:absolute;left:48.1px;top:166.4px" width="14" height="14" viewBox="0 0 14 14"><use href="#i-q"/></svg>
<div class="num" style="left:132px;top:167px">0.70</div><div class="num" style="left:186.5px;top:167px">0.70</div><div class="num" style="left:240.5px;top:167px">0.70</div>
<div class="lab" style="top:195px">visible</div><svg style="position:absolute;left:53.7px;top:196.2px" width="14" height="14" viewBox="0 0 14 14"><use href="#i-q"/></svg>
<div class="cb on" style="left:133px;top:198px"><svg width="12" height="12" viewBox="0 0 12 12"><path d="M2.8 6.2 L5 8.6 L9.2 3.2" fill="none" stroke="#fff" stroke-width="1.8" stroke-linecap="round" stroke-linejoin="round"/></svg></div>
<div class="lab" style="top:226px">mixins</div>
<div class="sel" style="left:130px;top:225px;width:28px;height:18px"><svg class="ud" width="6" height="12" viewBox="0 0 6 12"><path d="M0 4.8 L3 0.6 L6 4.8 Z M0 7.2 L3 11.4 L6 7.2 Z" fill="#a4a4a4"/></svg></div><svg style="position:absolute;left:168.1px;top:226.4px" width="14" height="14" viewBox="0 0 14 14"><use href="#i-plusc"/></svg>
<div class="sec" style="top:265px"><i></i><b style="letter-spacing:-.58px">COMPONENTS</b></div>
<div class="lab" style="top:314px">Add</div>
<div class="sel" style="left:130px;top:313px;width:143px;height:18px"><span>blend-character-model</span><svg class="ud" width="6" height="12" viewBox="0 0 6 12"><path d="M0 4.8 L3 0.6 L6 4.8 Z M0 7.2 L3 11.4 L6 7.2 Z" fill="#a4a4a4"/></svg></div><svg style="position:absolute;left:283.6px;top:314.5px" width="14" height="14" viewBox="0 0 14 14"><use href="#i-plusc"/></svg>
<div class="sec" style="top:353px"><i></i><b style="letter-spacing:-.85px">COLLADA-MODEL</b></div><svg style="position:absolute;left:135.4px;top:364.4px" width="14" height="14" viewBox="0 0 14 14"><use href="#i-q"/></svg>
<div class="btn" style="left:206px;top:360px;width:58px">copy html</div><div class="btn" style="left:274px;top:360px;width:46px">remove</div>
<div class="lab" style="top:402px">collada-model</div>
<div class="inp" style="left:130px;top:401px;width:129px;height:18px"><span>assets/media/models/ro</span></div>
<div class="sec" style="top:442px"><i></i><b style="letter-spacing:-.6px">MATERIAL</b></div><svg style="position:absolute;left:96.5px;top:452.7px" width="14" height="14" viewBox="0 0 14 14"><use href="#i-q"/></svg>
<div class="btn" style="left:206px;top:448px;width:58px">copy html</div><div class="btn" style="left:274px;top:448px;width:46px">remove</div>
<div class="lab" style="top:490px">depthTest</div>
<div class="cb on" style="left:133px;top:492px"><svg width="12" height="12" viewBox="0 0 12 12"><path d="M2.8 6.2 L5 8.6 L9.2 3.2" fill="none" stroke="#fff" stroke-width="1.8" stroke-linecap="round" stroke-linejoin="round"/></svg></div>
<div class="lab" style="top:520px">flatShading</div>
<div class="cb" style="left:133px;top:522px"></div>
</div>
</body>
</html>
